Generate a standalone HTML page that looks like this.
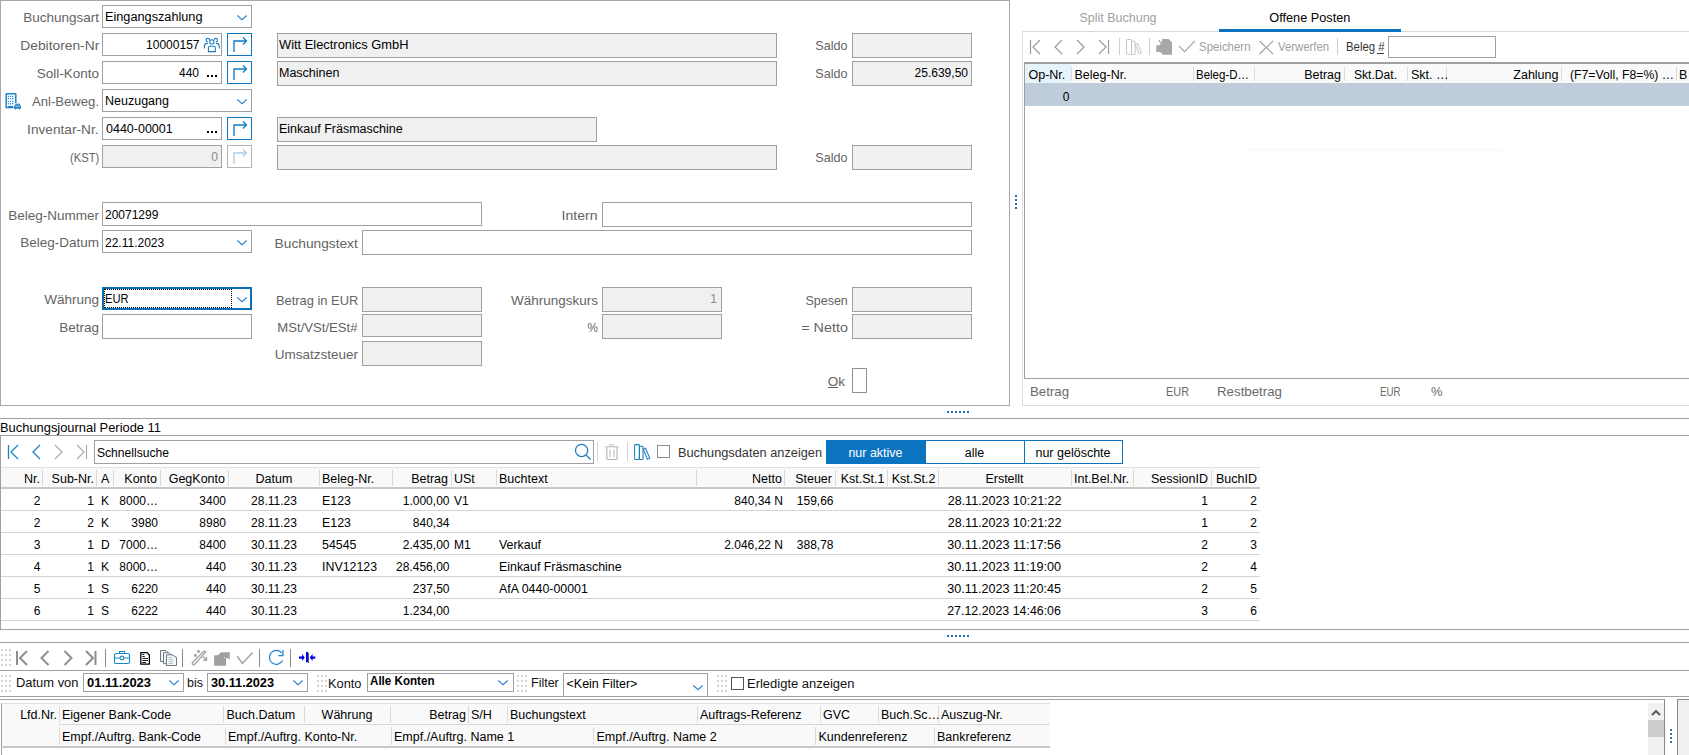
<!DOCTYPE html>
<html><head><meta charset="utf-8"><style>
html,body{margin:0;padding:0;width:1689px;height:755px;overflow:hidden;background:#fff;position:relative}
body>div,body>svg{position:absolute;box-sizing:border-box}
body>div{font-family:"Liberation Sans",sans-serif;line-height:16px;white-space:nowrap;overflow:visible}
</style></head><body>
<div style="left:0px;top:0px;width:1010px;height:406px;background:#fff;border:1px solid #a4a7ae;"></div>
<div style="left:19.20px;top:10px;width:79.80px;font-size:13.5px;color:#646464;text-align:right;">Buchungsart</div>
<div style="left:17.72px;top:38px;width:81.28px;font-size:13.5px;color:#646464;text-align:right;transform:scaleX(1.0223);transform-origin:right center;">Debitoren-Nr</div>
<div style="left:32.71px;top:66px;width:66.29px;font-size:13.5px;color:#646464;text-align:right;">Soll-Konto</div>
<div style="left:25.96px;top:94px;width:73.04px;font-size:13.5px;color:#646464;text-align:right;transform:scaleX(0.9705);transform-origin:right center;">Anl-Beweg.</div>
<div style="left:24.47px;top:122px;width:74.53px;font-size:13.5px;color:#646464;text-align:right;transform:scaleX(1.0124);transform-origin:right center;">Inventar-Nr.</div>
<div style="left:59.75px;top:150px;width:39.25px;font-size:13.5px;color:#646464;text-align:right;transform:scaleX(0.8313);transform-origin:right center;">(KST)</div>
<div style="left:102px;top:5px;width:150px;height:23px;background:#fff;border:1px solid #a0a0a0;"></div>
<div style="left:105.00px;top:9px;width:99.91px;font-size:12.5px;color:#000;text-align:left;transform:scaleX(1.0166);transform-origin:left center;">Eingangszahlung</div>
<svg style="left:237px;top:15px" width="11" height="7"><path d="M0.3 0.5 L5 4.7 L9.7 0.5" fill="none" stroke="#2a7fc8" stroke-width="1.05"/></svg>
<div style="left:102px;top:33px;width:120px;height:23px;background:#fff;border:1px solid #a0a0a0;"></div>
<div style="left:142.11px;top:37px;width:57.39px;font-size:12px;color:#000;text-align:right;">10000157</div>
<div style="left:227px;top:33px;width:25px;height:23px;background:#fff;border:1px solid #0b78c4;"></div>
<svg style="left:227px;top:33px" width="25" height="23"><path d="M7 19 V8 H19" fill="none" stroke="#0b78c4" stroke-width="1.3"/><path d="M16 4.5 L19.5 8 L16 11.5" fill="none" stroke="#0b78c4" stroke-width="1.3"/></svg>
<div style="left:102px;top:61px;width:120px;height:23px;background:#fff;border:1px solid #a0a0a0;"></div>
<div style="left:174.98px;top:65px;width:24.02px;font-size:12px;color:#000;text-align:right;">440</div>
<div style="left:207px;top:75px;width:2px;height:2px;background:#000;"></div>
<div style="left:211px;top:75px;width:2px;height:2px;background:#000;"></div>
<div style="left:215px;top:75px;width:2px;height:2px;background:#000;"></div>
<div style="left:227px;top:61px;width:25px;height:23px;background:#fff;border:1px solid #0b78c4;"></div>
<svg style="left:227px;top:61px" width="25" height="23"><path d="M7 19 V8 H19" fill="none" stroke="#0b78c4" stroke-width="1.3"/><path d="M16 4.5 L19.5 8 L16 11.5" fill="none" stroke="#0b78c4" stroke-width="1.3"/></svg>
<div style="left:102px;top:89px;width:150px;height:23px;background:#fff;border:1px solid #a0a0a0;"></div>
<div style="left:105.00px;top:93px;width:67.94px;font-size:12.5px;color:#000;text-align:left;">Neuzugang</div>
<svg style="left:237px;top:99px" width="11" height="7"><path d="M0.3 0.5 L5 4.7 L9.7 0.5" fill="none" stroke="#2a7fc8" stroke-width="1.05"/></svg>
<div style="left:102px;top:117px;width:120px;height:23px;background:#fff;border:1px solid #a0a0a0;"></div>
<div style="left:106.00px;top:121px;width:70.73px;font-size:12.5px;color:#000;text-align:left;">0440-00001</div>
<div style="left:207px;top:131px;width:2px;height:2px;background:#000;"></div>
<div style="left:211px;top:131px;width:2px;height:2px;background:#000;"></div>
<div style="left:215px;top:131px;width:2px;height:2px;background:#000;"></div>
<div style="left:227px;top:117px;width:25px;height:23px;background:#fff;border:1px solid #0b78c4;"></div>
<svg style="left:227px;top:117px" width="25" height="23"><path d="M7 19 V8 H19" fill="none" stroke="#0b78c4" stroke-width="1.3"/><path d="M16 4.5 L19.5 8 L16 11.5" fill="none" stroke="#0b78c4" stroke-width="1.3"/></svg>
<div style="left:102px;top:145px;width:120px;height:23px;background:#f0f0f0;border:1px solid #a0a0a0;"></div>
<div style="left:207.33px;top:149px;width:10.67px;font-size:12px;color:#8a8a8a;text-align:right;">0</div>
<div style="left:227px;top:145px;width:25px;height:23px;background:#fff;border:1px solid #b4b4b4;"></div>
<svg style="left:227px;top:145px" width="25" height="23"><path d="M7 19 V8 H19" fill="none" stroke="#a9cfe9" stroke-width="1.3"/><path d="M16 4.5 L19.5 8 L16 11.5" fill="none" stroke="#a9cfe9" stroke-width="1.3"/></svg>
<div style="left:277px;top:33px;width:500px;height:25px;background:#f0f0f0;border:1px solid #a0a0a0;"></div>
<div style="left:279.00px;top:37px;width:129.71px;font-size:12.5px;color:#000;text-align:left;transform:scaleX(1.0301);transform-origin:left center;">Witt Electronics GmbH</div>
<div style="left:277px;top:61px;width:500px;height:25px;background:#f0f0f0;border:1px solid #a0a0a0;"></div>
<div style="left:279.00px;top:65px;width:64.45px;font-size:12.5px;color:#000;text-align:left;">Maschinen</div>
<div style="left:277px;top:117px;width:320px;height:25px;background:#f0f0f0;border:1px solid #a0a0a0;"></div>
<div style="left:279.00px;top:121px;width:127.66px;font-size:12.5px;color:#000;text-align:left;">Einkauf Fräsmaschine</div>
<div style="left:277px;top:145px;width:500px;height:25px;background:#f0f0f0;border:1px solid #a0a0a0;"></div>
<div style="left:809.47px;top:38px;width:38.53px;font-size:13.5px;color:#646464;text-align:right;transform:scaleX(0.9326);transform-origin:right center;">Saldo</div>
<div style="left:852px;top:33px;width:120px;height:25px;background:#f0f0f0;border:1px solid #a0a0a0;"></div>
<div style="left:809.47px;top:66px;width:38.53px;font-size:13.5px;color:#646464;text-align:right;transform:scaleX(0.9326);transform-origin:right center;">Saldo</div>
<div style="left:852px;top:61px;width:120px;height:25px;background:#f0f0f0;border:1px solid #a0a0a0;"></div>
<div style="left:809.47px;top:150px;width:38.53px;font-size:13.5px;color:#646464;text-align:right;transform:scaleX(0.9326);transform-origin:right center;">Saldo</div>
<div style="left:852px;top:145px;width:120px;height:25px;background:#f0f0f0;border:1px solid #a0a0a0;"></div>
<div style="left:910.62px;top:65px;width:57.38px;font-size:12px;color:#000;text-align:right;">25.639,50</div>
<div style="left:4.22px;top:208px;width:94.78px;font-size:13.5px;color:#646464;text-align:right;">Beleg-Nummer</div>
<div style="left:102px;top:202px;width:380px;height:24px;background:#fff;border:1px solid #a0a0a0;"></div>
<div style="left:105.00px;top:207px;width:57.39px;font-size:12px;color:#000;text-align:left;">20071299</div>
<div style="left:559.48px;top:208px;width:38.52px;font-size:13.5px;color:#646464;text-align:right;transform:scaleX(1.0428);transform-origin:right center;">Intern</div>
<div style="left:602px;top:202px;width:370px;height:25px;background:#fff;border:1px solid #a0a0a0;"></div>
<div style="left:16.21px;top:235px;width:82.79px;font-size:13.5px;color:#646464;text-align:right;">Beleg-Datum</div>
<div style="left:102px;top:230px;width:150px;height:23px;background:#fff;border:1px solid #a0a0a0;"></div>
<div style="left:105.00px;top:235px;width:63.17px;font-size:12px;color:#000;text-align:left;">22.11.2023</div>
<svg style="left:237px;top:240px" width="11" height="7"><path d="M0.3 0.5 L5 4.7 L9.7 0.5" fill="none" stroke="#2a7fc8" stroke-width="1.05"/></svg>
<div style="left:272.20px;top:236px;width:85.80px;font-size:13.5px;color:#646464;text-align:right;transform:scaleX(1.0171);transform-origin:right center;">Buchungstext</div>
<div style="left:362px;top:230px;width:610px;height:25px;background:#fff;border:1px solid #a0a0a0;"></div>
<div style="left:40.22px;top:292px;width:58.78px;font-size:13.5px;color:#646464;text-align:right;">Währung</div>
<div style="left:102px;top:287px;width:150px;height:23px;background:#fff;border:2px solid #0a6fb8;"></div>
<div style="left:104px;top:289px;width:128px;height:19px;border:1px dotted #000"></div>
<div style="left:104.60px;top:291px;width:30.39px;font-size:12.5px;color:#000;text-align:left;transform:scaleX(0.8904);transform-origin:left center;">EUR</div>
<svg style="left:237px;top:297px" width="11" height="7"><path d="M0.3 0.5 L5 4.7 L9.7 0.5" fill="none" stroke="#2a7fc8" stroke-width="1.05"/></svg>
<div style="left:55.22px;top:320px;width:43.78px;font-size:13.5px;color:#646464;text-align:right;">Betrag</div>
<div style="left:102px;top:314px;width:150px;height:25px;background:#fff;border:1px solid #a0a0a0;"></div>
<div style="left:267.71px;top:293px;width:90.29px;font-size:13.5px;color:#646464;text-align:right;transform:scaleX(0.9538);transform-origin:right center;">Betrag in EUR</div>
<div style="left:362px;top:287px;width:120px;height:25px;background:#f0f0f0;border:1px solid #a0a0a0;"></div>
<div style="left:271.47px;top:320px;width:86.53px;font-size:13.5px;color:#646464;text-align:right;transform:scaleX(0.9718);transform-origin:right center;">MSt/VSt/ESt#</div>
<div style="left:362px;top:314px;width:120px;height:23px;background:#f0f0f0;border:1px solid #a0a0a0;"></div>
<div style="left:270.73px;top:347px;width:87.27px;font-size:13.5px;color:#646464;text-align:right;">Umsatzsteuer</div>
<div style="left:362px;top:341px;width:120px;height:25px;background:#f0f0f0;border:1px solid #a0a0a0;"></div>
<div style="left:506.97px;top:293px;width:91.03px;font-size:13.5px;color:#646464;text-align:right;">Währungskurs</div>
<div style="left:602px;top:287px;width:120px;height:25px;background:#f0f0f0;border:1px solid #a0a0a0;"></div>
<div style="left:706.33px;top:291px;width:10.67px;font-size:12px;color:#8a8a8a;text-align:right;">1</div>
<div style="left:582.00px;top:320px;width:16.00px;font-size:13.5px;color:#646464;text-align:right;transform:scaleX(0.8664);transform-origin:right center;">%</div>
<div style="left:602px;top:314px;width:120px;height:25px;background:#f0f0f0;border:1px solid #a0a0a0;"></div>
<div style="left:798.21px;top:293px;width:49.79px;font-size:13.5px;color:#646464;text-align:right;transform:scaleX(0.9238);transform-origin:right center;">Spesen</div>
<div style="left:852px;top:287px;width:120px;height:25px;background:#f0f0f0;border:1px solid #a0a0a0;"></div>
<div style="left:800.10px;top:320px;width:47.90px;font-size:13.5px;color:#646464;text-align:right;transform:scaleX(1.0637);transform-origin:right center;">= Netto</div>
<div style="left:852px;top:314px;width:120px;height:25px;background:#f0f0f0;border:1px solid #a0a0a0;"></div>
<div style="left:823.75px;top:374px;width:21.25px;font-size:13.5px;color:#646464;text-align:right;">Ok</div>
<div style="left:828px;top:387px;width:10px;height:1px;background:#646464;"></div>
<div style="left:852px;top:368px;width:15px;height:25px;background:#fff;border:1px solid #909090;"></div>
<svg style="left:0;top:88px" width="24" height="24"><g fill="none" stroke="#1f80c6" stroke-width="1.5"><path d="M13.5 19.5 H6.2 V6.5 Q6.2 5.8 6.9 5.8 H15 Q15.8 5.8 15.8 6.6 V15"/></g><rect x="7.800000000000001" y="7.800000000000001" width="1.3" height="1.3" fill="#3a8fd0"/><rect x="7.800000000000001" y="10.0" width="1.3" height="1.3" fill="#3a8fd0"/><rect x="7.800000000000001" y="12.8" width="1.3" height="1.3" fill="#3a8fd0"/><rect x="7.800000000000001" y="15.0" width="1.3" height="1.3" fill="#3a8fd0"/><rect x="9.9" y="7.800000000000001" width="1.3" height="1.3" fill="#3a8fd0"/><rect x="9.9" y="10.0" width="1.3" height="1.3" fill="#3a8fd0"/><rect x="9.9" y="12.8" width="1.3" height="1.3" fill="#3a8fd0"/><rect x="9.9" y="15.0" width="1.3" height="1.3" fill="#3a8fd0"/><rect x="12.0" y="7.800000000000001" width="1.3" height="1.3" fill="#3a8fd0"/><rect x="12.0" y="10.0" width="1.3" height="1.3" fill="#3a8fd0"/><rect x="12.0" y="12.8" width="1.3" height="1.3" fill="#3a8fd0"/><rect x="12.0" y="15.0" width="1.3" height="1.3" fill="#3a8fd0"/><rect x="8" y="18" width="5" height="2" rx="0.8" fill="#1a7cc4"/><path d="M15.2 16.3 H20" stroke="#1f80c6" stroke-width="1.2"/><rect x="14" y="17.2" width="7" height="3.2" rx="1" fill="#1a7cc4"/><rect x="15.2" y="18" width="4.6" height="1" fill="#8cc0e6"/><circle cx="15.5" cy="20.5" r="0.9" fill="#1a7cc4"/><circle cx="19.5" cy="20.5" r="0.9" fill="#1a7cc4"/></svg>
<svg style="left:200px;top:34px" width="24" height="22"><g fill="none" stroke="#1a7cc4" stroke-width="1.1"><circle cx="11.8" cy="7.9" r="2.1"/><path d="M8.4 17.6 V13.7 Q8.4 12.2 9.9 12.2 H13.7 Q15.3 12.2 15.3 13.7 V17.6 Z"/><path d="M7.7 7.9 A1.75 1.75 0 1 1 9.6 6.2"/><path d="M4.4 14.5 V12.3 Q4.4 9.4 7.9 9.4"/><path d="M15.9 7.9 A1.75 1.75 0 1 0 14 6.2"/><path d="M19.3 14.5 V12.3 Q19.3 9.4 15.8 9.4"/></g></svg>
<div style="left:1022px;top:31px;width:667px;height:1px;background:#d9d9d9;"></div>
<div style="left:1022px;top:31px;width:1px;height:375px;background:#dcdcdc;"></div>
<div style="left:1022px;top:405px;width:667px;height:1px;background:#dcdcdc;"></div>
<div style="left:1077.43px;top:10px;width:81.14px;font-size:12.5px;color:#a0a0a0;text-align:center;">Split Buchung</div>
<div style="left:1268.16px;top:10px;width:83.69px;font-size:12.5px;color:#000;text-align:center;transform:scaleX(1.0165);transform-origin:center center;">Offene Posten</div>
<div style="left:1219px;top:29px;width:182px;height:3px;background:#0b74c0;"></div>
<svg style="left:0;top:0" width="1689" height="755"><path d="M1030.5 40 V54" stroke="#9a9a9a" stroke-width="1.2"/><path d="M1040 40 L1033 47 L1040 54" fill="none" stroke="#9a9a9a" stroke-width="1.2"/><path d="M1062 40 L1055 47 L1062 54" fill="none" stroke="#9a9a9a" stroke-width="1.2"/><path d="M1077 40 L1084 47 L1077 54" fill="none" stroke="#9a9a9a" stroke-width="1.2"/><path d="M1099 40 L1106 47 L1099 54" fill="none" stroke="#9a9a9a" stroke-width="1.2"/><path d="M1108.5 40 V54" stroke="#9a9a9a" stroke-width="1.2"/><path d="M1119.5 38 V55" stroke="#d0d0d0" stroke-width="1"/><path d="M1149.5 38 V55" stroke="#d0d0d0" stroke-width="1"/><path d="M1337.5 38 V55" stroke="#d0d0d0" stroke-width="1"/><g fill="none" stroke="#c4c4c4" stroke-width="1"><rect x="1126.5" y="39.5" width="5" height="14.8" rx="0.8"/><rect x="1131.5" y="41.3" width="3.6" height="13" rx="0.6"/><path d="M1135.3 44.3 L1137.6 43.3 L1141.4 52.8 L1139 53.8 Z"/></g><path d="M1156.2 45.2 H1159.4 L1160.8 43.8 L1158.2 40.6 L1159.2 39.8 L1161.8 42.8 L1162 39 H1168.6 L1172 42.3 V54.8 H1162 V52.8 H1160 L1159.3 52 H1156.2 Z" fill="#a8a8a8"/><path d="M1179 46 L1184.6 51.6 L1194.8 41" fill="none" stroke="#a8a8a8" stroke-width="1.1"/><path d="M1259.5 41 L1273 54 M1273 41 L1259.5 54" stroke="#a0a0a0" stroke-width="1.2"/></svg>
<div style="left:1199.00px;top:39px;width:60.29px;font-size:12.5px;color:#a0a0a0;text-align:left;transform:scaleX(0.9150);transform-origin:left center;">Speichern</div>
<div style="left:1278.00px;top:39px;width:60.28px;font-size:12.5px;color:#a0a0a0;text-align:left;transform:scaleX(0.9062);transform-origin:left center;">Verwerfen</div>
<div style="left:1345.50px;top:39px;width:46.40px;font-size:12.5px;color:#333;text-align:left;transform:scaleX(0.9081);transform-origin:left center;">Beleg #</div>
<div style="left:1377px;top:53px;width:7px;height:1px;background:#333;"></div>
<div style="left:1388px;top:36px;width:108px;height:22px;background:#fff;border:1px solid #a0a0a0;"></div>
<div style="left:1024px;top:62px;width:1px;height:317px;background:#a0a0a0;"></div>
<div style="left:1024px;top:62px;width:665px;height:2px;background:#a0a0a0;"></div>
<div style="left:1024px;top:378px;width:665px;height:1px;background:#a0a0a0;"></div>
<div style="left:1025px;top:64px;width:664px;height:19px;background:#fafafa;"></div>
<div style="left:1025px;top:64px;width:46px;height:19px;background:#e5f3fb;"></div>
<div style="left:1025px;top:83px;width:664px;height:23px;background:#bfccd9;"></div>
<div style="left:1071px;top:67px;width:1px;height:14px;background:#dadada;"></div>
<div style="left:1193px;top:67px;width:1px;height:14px;background:#dadada;"></div>
<div style="left:1254px;top:67px;width:1px;height:14px;background:#dadada;"></div>
<div style="left:1344px;top:67px;width:1px;height:14px;background:#dadada;"></div>
<div style="left:1407px;top:67px;width:1px;height:14px;background:#dadada;"></div>
<div style="left:1446px;top:67px;width:1px;height:14px;background:#dadada;"></div>
<div style="left:1561px;top:67px;width:1px;height:14px;background:#dadada;"></div>
<div style="left:1676px;top:67px;width:1px;height:14px;background:#dadada;"></div>
<div style="left:1028.50px;top:67px;width:40.81px;font-size:12.5px;color:#000;text-align:left;">Op-Nr.</div>
<div style="left:1074.50px;top:67px;width:56.11px;font-size:12.5px;color:#000;text-align:left;">Beleg-Nr.</div>
<div style="left:1196.00px;top:67px;width:61.66px;font-size:12.5px;color:#000;text-align:left;transform:scaleX(0.9192);transform-origin:left center;">Beleg-D…</div>
<div style="left:1300.17px;top:67px;width:40.83px;font-size:12.5px;color:#000;text-align:right;">Betrag</div>
<div style="left:1354.00px;top:67px;width:48.46px;font-size:12.5px;color:#000;text-align:left;transform:scaleX(0.9672);transform-origin:left center;">Skt.Dat.</div>
<div style="left:1411.00px;top:67px;width:41.51px;font-size:12.5px;color:#000;text-align:left;">Skt. …</div>
<div style="left:1509.33px;top:67px;width:49.17px;font-size:12.5px;color:#000;text-align:right;">Zahlung</div>
<div style="left:1570.00px;top:67px;width:110.29px;font-size:12.5px;color:#000;text-align:left;transform:scaleX(0.9785);transform-origin:left center;">(F7=Voll, F8=%) …</div>
<div style="left:1679.00px;top:67px;width:12.34px;font-size:12.5px;color:#000;text-align:left;">B</div>
<div style="left:1058.83px;top:89px;width:10.67px;font-size:12px;color:#000;text-align:right;">0</div>
<div style="left:1247px;top:148px;width:255px;height:3px;background:#fbfbfb;"></div>
<div style="left:1029.50px;top:384px;width:42.30px;font-size:13px;color:#6a6a6a;text-align:left;transform:scaleX(1.0182);transform-origin:left center;">Betrag</div>
<div style="left:1166.00px;top:384px;width:31.45px;font-size:13px;color:#6a6a6a;text-align:left;transform:scaleX(0.8380);transform-origin:left center;">EUR</div>
<div style="left:1217.00px;top:384px;width:67.59px;font-size:13px;color:#6a6a6a;text-align:left;transform:scaleX(1.0222);transform-origin:left center;">Restbetrag</div>
<div style="left:1380.00px;top:384px;width:31.45px;font-size:13px;color:#6a6a6a;text-align:left;transform:scaleX(0.7469);transform-origin:left center;">EUR</div>
<div style="left:1431.00px;top:384px;width:15.56px;font-size:13px;color:#6a6a6a;text-align:left;">%</div>
<div style="left:1015px;top:195px;width:2px;height:2px;background:#1a74c0;"></div>
<div style="left:1015px;top:199px;width:2px;height:2px;background:#1a74c0;"></div>
<div style="left:1015px;top:203px;width:2px;height:2px;background:#1a74c0;"></div>
<div style="left:1015px;top:207px;width:2px;height:2px;background:#1a74c0;"></div>
<div style="left:947px;top:411px;width:2px;height:2px;background:#1a74c0;"></div>
<div style="left:951px;top:411px;width:2px;height:2px;background:#1a74c0;"></div>
<div style="left:955px;top:411px;width:2px;height:2px;background:#1a74c0;"></div>
<div style="left:959px;top:411px;width:2px;height:2px;background:#1a74c0;"></div>
<div style="left:963px;top:411px;width:2px;height:2px;background:#1a74c0;"></div>
<div style="left:967px;top:411px;width:2px;height:2px;background:#1a74c0;"></div>
<div style="left:947px;top:635px;width:2px;height:2px;background:#1a74c0;"></div>
<div style="left:951px;top:635px;width:2px;height:2px;background:#1a74c0;"></div>
<div style="left:955px;top:635px;width:2px;height:2px;background:#1a74c0;"></div>
<div style="left:959px;top:635px;width:2px;height:2px;background:#1a74c0;"></div>
<div style="left:963px;top:635px;width:2px;height:2px;background:#1a74c0;"></div>
<div style="left:967px;top:635px;width:2px;height:2px;background:#1a74c0;"></div>
<div style="left:0px;top:418px;width:1689px;height:1px;background:#a0a0a0;"></div>
<div style="left:0.00px;top:420px;width:160.13px;font-size:12.5px;color:#000;text-align:left;transform:scaleX(1.0312);transform-origin:left center;">Buchungsjournal Periode 11</div>
<div style="left:0px;top:435px;width:1689px;height:1px;background:#a0a0a0;"></div>
<div style="left:0px;top:435px;width:1px;height:195px;background:#a0a0a0;"></div>
<div style="left:0px;top:629px;width:1689px;height:1px;background:#a0a0a0;"></div>
<div style="left:94px;top:440px;width:500px;height:24px;background:#fff;border:1px solid #a0a0a0;"></div>
<svg style="left:0;top:0" width="1689" height="755"><path d="M8.5 445 V459" stroke="#1a86c8" stroke-width="1.3"/><path d="M18 445 L11 452 L18 459" fill="none" stroke="#1a86c8" stroke-width="1.3"/><path d="M40 445 L33 452 L40 459" fill="none" stroke="#1a86c8" stroke-width="1.3"/><path d="M55 445 L62 452 L55 459" fill="none" stroke="#aaa" stroke-width="1.2"/><path d="M77 445 L84 452 L77 459" fill="none" stroke="#aaa" stroke-width="1.2"/><path d="M86.5 445 V459" stroke="#aaa" stroke-width="1.2"/><circle cx="581.6" cy="450.4" r="6.1" fill="none" stroke="#1a7fc0" stroke-width="1.25"/><path d="M586.3 455.3 L590.6 459.5" stroke="#1a7fc0" stroke-width="1.3"/><path d="M597.5 442 V461" stroke="#d4d4d4"/><path d="M627.5 442 V461" stroke="#d4d4d4"/><path d="M605.2 446.8 H618.5" stroke="#c4c4c4" stroke-width="1.3"/><path d="M609.5 446.3 V444.8 H613.5 V446.3" fill="none" stroke="#c4c4c4" stroke-width="1"/><path d="M606.8 447.5 V458.5 Q606.8 459.5 607.8 459.5 H616 Q617 459.5 617 458.5 V447.5" fill="none" stroke="#b4b4b4" stroke-width="1.1"/><path d="M610 449.5 V457 M614 449.5 V457" stroke="#c8c8c8" stroke-width="1.3"/><g fill="none" stroke="#1a7fc0" stroke-width="1.05"><rect x="634.6" y="444.6" width="4.8" height="14.8" rx="0.8"/><rect x="639.4" y="446.3" width="3.6" height="13.1" rx="0.6"/><path d="M643.3 449.2 L645.5 448.2 L649.8 458.2 L647.4 459.3 Z"/></g></svg>
<div style="left:97.00px;top:445px;width:78.35px;font-size:12.5px;color:#000;text-align:left;transform:scaleX(0.9683);transform-origin:left center;">Schnellsuche</div>
<div style="left:657px;top:445px;width:13px;height:13px;background:#fff;border:1px solid #8c8c8c;"></div>
<div style="left:678.00px;top:445px;width:145.09px;font-size:12.5px;color:#333;text-align:left;transform:scaleX(1.0206);transform-origin:left center;">Buchungsdaten anzeigen</div>
<div style="left:826px;top:440px;width:100px;height:24px;background:#0b74c0;"></div>
<div style="left:925px;top:440px;width:198px;height:24px;background:#fff;border:1px solid #0b74c0;"></div>
<div style="left:1024px;top:441px;width:1px;height:22px;background:#0b74c0;"></div>
<div style="left:846.40px;top:445px;width:58.19px;font-size:12.5px;color:#fff;text-align:center;">nur aktive</div>
<div style="left:962.77px;top:445px;width:23.46px;font-size:12.5px;color:#000;text-align:center;">alle</div>
<div style="left:1033.48px;top:445px;width:79.05px;font-size:12.5px;color:#000;text-align:center;">nur gelöschte</div>
<div style="left:1px;top:467px;width:1259px;height:1px;background:#e0e0e0;"></div>
<div style="left:1px;top:468px;width:1259px;height:20px;background:#f9f9f9;"></div>
<div style="left:1px;top:487px;width:1259px;height:2px;background:#c8c8c8;"></div>
<div style="left:42px;top:470px;width:1px;height:16px;background:#dadada;"></div>
<div style="left:96px;top:470px;width:1px;height:16px;background:#dadada;"></div>
<div style="left:113px;top:470px;width:1px;height:16px;background:#dadada;"></div>
<div style="left:160px;top:470px;width:1px;height:16px;background:#dadada;"></div>
<div style="left:228px;top:470px;width:1px;height:16px;background:#dadada;"></div>
<div style="left:319px;top:470px;width:1px;height:16px;background:#dadada;"></div>
<div style="left:392px;top:470px;width:1px;height:16px;background:#dadada;"></div>
<div style="left:451px;top:470px;width:1px;height:16px;background:#dadada;"></div>
<div style="left:496px;top:470px;width:1px;height:16px;background:#dadada;"></div>
<div style="left:696px;top:470px;width:1px;height:16px;background:#dadada;"></div>
<div style="left:784px;top:470px;width:1px;height:16px;background:#dadada;"></div>
<div style="left:835px;top:470px;width:1px;height:16px;background:#dadada;"></div>
<div style="left:887px;top:470px;width:1px;height:16px;background:#dadada;"></div>
<div style="left:938px;top:470px;width:1px;height:16px;background:#dadada;"></div>
<div style="left:1071px;top:470px;width:1px;height:16px;background:#dadada;"></div>
<div style="left:1133px;top:470px;width:1px;height:16px;background:#dadada;"></div>
<div style="left:1211px;top:470px;width:1px;height:16px;background:#dadada;"></div>
<div style="left:20.03px;top:471px;width:19.97px;font-size:12.5px;color:#000;text-align:right;">Nr.</div>
<div style="left:47.62px;top:471px;width:46.38px;font-size:12.5px;color:#000;text-align:right;">Sub-Nr.</div>
<div style="left:101.00px;top:471px;width:12.34px;font-size:12.5px;color:#000;text-align:left;">A</div>
<div style="left:120.33px;top:471px;width:36.67px;font-size:12.5px;color:#000;text-align:right;">Konto</div>
<div style="left:164.71px;top:471px;width:60.29px;font-size:12.5px;color:#000;text-align:right;">GegKonto</div>
<div style="left:253.59px;top:471px;width:40.82px;font-size:12.5px;color:#000;text-align:center;">Datum</div>
<div style="left:322.00px;top:471px;width:56.11px;font-size:12.5px;color:#000;text-align:left;">Beleg-Nr.</div>
<div style="left:407.17px;top:471px;width:40.83px;font-size:12.5px;color:#000;text-align:right;">Betrag</div>
<div style="left:454.00px;top:471px;width:24.84px;font-size:12.5px;color:#000;text-align:left;">USt</div>
<div style="left:499.00px;top:471px;width:52.64px;font-size:12.5px;color:#000;text-align:left;">Buchtext</div>
<div style="left:748.12px;top:471px;width:33.88px;font-size:12.5px;color:#000;text-align:right;">Netto</div>
<div style="left:791.17px;top:471px;width:40.83px;font-size:12.5px;color:#000;text-align:right;">Steuer</div>
<div style="left:836.73px;top:471px;width:47.77px;font-size:12.5px;color:#000;text-align:right;">Kst.St.1</div>
<div style="left:887.73px;top:471px;width:47.77px;font-size:12.5px;color:#000;text-align:right;">Kst.St.2</div>
<div style="left:983.40px;top:471px;width:42.20px;font-size:12.5px;color:#000;text-align:center;">Erstellt</div>
<div style="left:1074.00px;top:471px;width:58.88px;font-size:12.5px;color:#000;text-align:left;">Int.Bel.Nr.</div>
<div style="left:1147.03px;top:471px;width:60.97px;font-size:12.5px;color:#000;text-align:right;">SessionID</div>
<div style="left:1212.01px;top:471px;width:44.99px;font-size:12.5px;color:#000;text-align:right;">BuchID</div>
<div style="left:1px;top:510px;width:1259px;height:1px;background:#d4d4d4;"></div>
<div style="left:29.83px;top:493px;width:10.67px;font-size:12px;color:#000;text-align:right;">2</div>
<div style="left:83.33px;top:493px;width:10.67px;font-size:12px;color:#000;text-align:right;">1</div>
<div style="left:101.00px;top:493px;width:12.00px;font-size:12px;color:#000;text-align:left;">K</div>
<div style="left:115.30px;top:493px;width:42.70px;font-size:12px;color:#000;text-align:right;">8000…</div>
<div style="left:195.30px;top:493px;width:30.70px;font-size:12px;color:#000;text-align:right;">3400</div>
<div style="left:249.09px;top:493px;width:49.82px;font-size:12px;color:#000;text-align:center;">28.11.23</div>
<div style="left:322.00px;top:493px;width:32.96px;font-size:12.4px;color:#000;text-align:left;">E123</div>
<div style="left:398.79px;top:493px;width:50.71px;font-size:12px;color:#000;text-align:right;">1.000,00</div>
<div style="left:454.00px;top:493px;width:18.68px;font-size:12px;color:#000;text-align:left;">V1</div>
<div style="left:730.30px;top:493px;width:52.70px;font-size:12px;color:#000;text-align:right;">840,34 N</div>
<div style="left:792.80px;top:493px;width:40.70px;font-size:12px;color:#000;text-align:right;">159,66</div>
<div style="left:947.89px;top:493px;width:113.21px;font-size:12px;color:#000;text-align:center;transform:scaleX(1.0411);transform-origin:center center;">28.11.2023 10:21:22</div>
<div style="left:1197.33px;top:493px;width:10.67px;font-size:12px;color:#000;text-align:right;">1</div>
<div style="left:1246.33px;top:493px;width:10.67px;font-size:12px;color:#000;text-align:right;">2</div>
<div style="left:1px;top:532px;width:1259px;height:1px;background:#d4d4d4;"></div>
<div style="left:29.83px;top:515px;width:10.67px;font-size:12px;color:#000;text-align:right;">2</div>
<div style="left:83.33px;top:515px;width:10.67px;font-size:12px;color:#000;text-align:right;">2</div>
<div style="left:101.00px;top:515px;width:12.00px;font-size:12px;color:#000;text-align:left;">K</div>
<div style="left:127.30px;top:515px;width:30.70px;font-size:12px;color:#000;text-align:right;">3980</div>
<div style="left:195.30px;top:515px;width:30.70px;font-size:12px;color:#000;text-align:right;">8980</div>
<div style="left:249.09px;top:515px;width:49.82px;font-size:12px;color:#000;text-align:center;">28.11.23</div>
<div style="left:322.00px;top:515px;width:32.96px;font-size:12.4px;color:#000;text-align:left;">E123</div>
<div style="left:408.80px;top:515px;width:40.70px;font-size:12px;color:#000;text-align:right;">840,34</div>
<div style="left:947.89px;top:515px;width:113.21px;font-size:12px;color:#000;text-align:center;transform:scaleX(1.0411);transform-origin:center center;">28.11.2023 10:21:22</div>
<div style="left:1197.33px;top:515px;width:10.67px;font-size:12px;color:#000;text-align:right;">1</div>
<div style="left:1246.33px;top:515px;width:10.67px;font-size:12px;color:#000;text-align:right;">2</div>
<div style="left:1px;top:554px;width:1259px;height:1px;background:#d4d4d4;"></div>
<div style="left:29.83px;top:537px;width:10.67px;font-size:12px;color:#000;text-align:right;">3</div>
<div style="left:83.33px;top:537px;width:10.67px;font-size:12px;color:#000;text-align:right;">1</div>
<div style="left:101.00px;top:537px;width:12.67px;font-size:12px;color:#000;text-align:left;">D</div>
<div style="left:115.30px;top:537px;width:42.70px;font-size:12px;color:#000;text-align:right;">7000…</div>
<div style="left:195.30px;top:537px;width:30.70px;font-size:12px;color:#000;text-align:right;">8400</div>
<div style="left:249.09px;top:537px;width:49.82px;font-size:12px;color:#000;text-align:center;">30.11.23</div>
<div style="left:322.00px;top:537px;width:38.48px;font-size:12.4px;color:#000;text-align:left;">54545</div>
<div style="left:398.79px;top:537px;width:50.71px;font-size:12px;color:#000;text-align:right;">2.435,00</div>
<div style="left:454.00px;top:537px;width:20.67px;font-size:12px;color:#000;text-align:left;">M1</div>
<div style="left:499.00px;top:537px;width:46.05px;font-size:12.4px;color:#000;text-align:left;">Verkauf</div>
<div style="left:720.29px;top:537px;width:62.71px;font-size:12px;color:#000;text-align:right;">2.046,22 N</div>
<div style="left:792.80px;top:537px;width:40.70px;font-size:12px;color:#000;text-align:right;">388,78</div>
<div style="left:948.34px;top:537px;width:112.32px;font-size:12px;color:#000;text-align:center;transform:scaleX(1.0496);transform-origin:center center;">30.11.2023 11:17:56</div>
<div style="left:1197.33px;top:537px;width:10.67px;font-size:12px;color:#000;text-align:right;">2</div>
<div style="left:1246.33px;top:537px;width:10.67px;font-size:12px;color:#000;text-align:right;">3</div>
<div style="left:1px;top:576px;width:1259px;height:1px;background:#d4d4d4;"></div>
<div style="left:29.83px;top:559px;width:10.67px;font-size:12px;color:#000;text-align:right;">4</div>
<div style="left:83.33px;top:559px;width:10.67px;font-size:12px;color:#000;text-align:right;">1</div>
<div style="left:101.00px;top:559px;width:12.00px;font-size:12px;color:#000;text-align:left;">K</div>
<div style="left:115.30px;top:559px;width:42.70px;font-size:12px;color:#000;text-align:right;">8000…</div>
<div style="left:201.98px;top:559px;width:24.02px;font-size:12px;color:#000;text-align:right;">440</div>
<div style="left:249.09px;top:559px;width:49.82px;font-size:12px;color:#000;text-align:center;">30.11.23</div>
<div style="left:322.00px;top:559px;width:59.15px;font-size:12.4px;color:#000;text-align:left;">INV12123</div>
<div style="left:392.12px;top:559px;width:57.38px;font-size:12px;color:#000;text-align:right;">28.456,00</div>
<div style="left:499.00px;top:559px;width:126.67px;font-size:12.4px;color:#000;text-align:left;">Einkauf Fräsmaschine</div>
<div style="left:948.34px;top:559px;width:112.32px;font-size:12px;color:#000;text-align:center;transform:scaleX(1.0496);transform-origin:center center;">30.11.2023 11:19:00</div>
<div style="left:1197.33px;top:559px;width:10.67px;font-size:12px;color:#000;text-align:right;">2</div>
<div style="left:1246.33px;top:559px;width:10.67px;font-size:12px;color:#000;text-align:right;">4</div>
<div style="left:1px;top:598px;width:1259px;height:1px;background:#d4d4d4;"></div>
<div style="left:29.83px;top:581px;width:10.67px;font-size:12px;color:#000;text-align:right;">5</div>
<div style="left:83.33px;top:581px;width:10.67px;font-size:12px;color:#000;text-align:right;">1</div>
<div style="left:101.00px;top:581px;width:12.00px;font-size:12px;color:#000;text-align:left;">S</div>
<div style="left:127.30px;top:581px;width:30.70px;font-size:12px;color:#000;text-align:right;">6220</div>
<div style="left:201.98px;top:581px;width:24.02px;font-size:12px;color:#000;text-align:right;">440</div>
<div style="left:249.09px;top:581px;width:49.82px;font-size:12px;color:#000;text-align:center;">30.11.23</div>
<div style="left:408.80px;top:581px;width:40.70px;font-size:12px;color:#000;text-align:right;">237,50</div>
<div style="left:499.00px;top:581px;width:92.94px;font-size:12.4px;color:#000;text-align:left;">AfA 0440-00001</div>
<div style="left:948.34px;top:581px;width:112.32px;font-size:12px;color:#000;text-align:center;transform:scaleX(1.0496);transform-origin:center center;">30.11.2023 11:20:45</div>
<div style="left:1197.33px;top:581px;width:10.67px;font-size:12px;color:#000;text-align:right;">2</div>
<div style="left:1246.33px;top:581px;width:10.67px;font-size:12px;color:#000;text-align:right;">5</div>
<div style="left:1px;top:620px;width:1259px;height:1px;background:#d4d4d4;"></div>
<div style="left:29.83px;top:603px;width:10.67px;font-size:12px;color:#000;text-align:right;">6</div>
<div style="left:83.33px;top:603px;width:10.67px;font-size:12px;color:#000;text-align:right;">1</div>
<div style="left:101.00px;top:603px;width:12.00px;font-size:12px;color:#000;text-align:left;">S</div>
<div style="left:127.30px;top:603px;width:30.70px;font-size:12px;color:#000;text-align:right;">6222</div>
<div style="left:201.98px;top:603px;width:24.02px;font-size:12px;color:#000;text-align:right;">440</div>
<div style="left:249.09px;top:603px;width:49.82px;font-size:12px;color:#000;text-align:center;">30.11.23</div>
<div style="left:398.79px;top:603px;width:50.71px;font-size:12px;color:#000;text-align:right;">1.234,00</div>
<div style="left:947.45px;top:603px;width:114.10px;font-size:12px;color:#000;text-align:center;transform:scaleX(1.0327);transform-origin:center center;">27.12.2023 14:46:06</div>
<div style="left:1197.33px;top:603px;width:10.67px;font-size:12px;color:#000;text-align:right;">3</div>
<div style="left:1246.33px;top:603px;width:10.67px;font-size:12px;color:#000;text-align:right;">6</div>
<div style="left:0px;top:642px;width:1689px;height:1px;background:#a0a0a0;"></div>
<div style="left:1px;top:649px;width:2px;height:2px;background:#d4d4d4;"></div>
<div style="left:5px;top:649px;width:2px;height:2px;background:#d4d4d4;"></div>
<div style="left:9px;top:649px;width:2px;height:2px;background:#d4d4d4;"></div>
<div style="left:1px;top:654px;width:2px;height:2px;background:#d4d4d4;"></div>
<div style="left:5px;top:654px;width:2px;height:2px;background:#d4d4d4;"></div>
<div style="left:9px;top:654px;width:2px;height:2px;background:#d4d4d4;"></div>
<div style="left:1px;top:659px;width:2px;height:2px;background:#d4d4d4;"></div>
<div style="left:5px;top:659px;width:2px;height:2px;background:#d4d4d4;"></div>
<div style="left:9px;top:659px;width:2px;height:2px;background:#d4d4d4;"></div>
<div style="left:1px;top:664px;width:2px;height:2px;background:#d4d4d4;"></div>
<div style="left:5px;top:664px;width:2px;height:2px;background:#d4d4d4;"></div>
<div style="left:9px;top:664px;width:2px;height:2px;background:#d4d4d4;"></div>
<svg style="left:0;top:0" width="1689" height="755"><path d="M17 651 V665" stroke="#8e8e8e" stroke-width="2"/><path d="M27 651 L20 658 L27 665" fill="none" stroke="#8e8e8e" stroke-width="2"/><path d="M48.5 651 L41.5 658 L48.5 665" fill="none" stroke="#8e8e8e" stroke-width="2"/><path d="M64.5 651 L71.5 658 L64.5 665" fill="none" stroke="#8e8e8e" stroke-width="2"/><path d="M86 651 L93 658 L86 665" fill="none" stroke="#8e8e8e" stroke-width="2"/><path d="M95.5 651 V665" stroke="#8e8e8e" stroke-width="2"/><path d="M105.5 649 V667" stroke="#8a8a8a" stroke-width="1"/><path d="M182.5 649 V667" stroke="#8a8a8a" stroke-width="1"/><path d="M259.5 649 V667" stroke="#8a8a8a" stroke-width="1"/><path d="M290.5 649 V667" stroke="#8a8a8a" stroke-width="1"/><g fill="none" stroke="#1a86c8" stroke-width="1.1"><path d="M116.5 653.5 H127.5 Q129.5 653.5 129.5 655.5 V662 Q129.5 663.5 128 663.5 H116 Q114.5 663.5 114.5 662 V655.5 Q114.5 653.5 116.5 653.5 Z"/><path d="M119.5 653.5 V651.5 H124.5 V653.5"/><path d="M114.5 658 H120 M124 658 H129.5"/><circle cx="122" cy="658" r="1.9"/></g><g fill="none" stroke="#000" stroke-width="1.25"><path d="M140.8 652.6 H147 L149.4 655 V664.2 H140.8 Z"/></g><g stroke="#000" stroke-width="0.9"><path d="M142.3 654.5 H144.3 M142.3 656.5 H144.8 M142.3 658.5 H148 M142.3 660.5 H148 M142.3 662.5 H146"/></g><path d="M160.5 650.5 H166 L168.5 653 V661.5 H160.5 Z" fill="#f2f7f9" stroke="#707884" stroke-width="1"/><path d="M163.5 652.7 H169 L171.5 655.2 V663.7 H163.5 Z" fill="#f2f7f9" stroke="#707884" stroke-width="1"/><path d="M166.5 654.8 H172 L176.5 657.3 V665.5 H166.5 Z" fill="#f2f7f9" stroke="#707884" stroke-width="1"/><path d="M168.5 657.5 H172 M168.5 659.5 H173 M168.5 661.5 H173 M168.5 663.5 H173" stroke="#a8b0b8" stroke-width="0.8"/><path d="M192.5 662.5 L203.5 651.5 Q205 650.5 205.8 652 L194.5 664.5 Q193 665.5 192.3 664 Z" fill="#fff" stroke="#a0a0a0" stroke-width="1.3"/><rect x="197.2" y="650.2" width="2.6" height="2.6" fill="#a0a0a0"/><rect x="194.1" y="654.1" width="2.6" height="2.6" fill="#a0a0a0"/><path d="M203 656.5 L206.5 660 M206.5 657 V660.3 H203.2" fill="none" stroke="#a0a0a0" stroke-width="1.2"/><path d="M214.1 655.2 H218 L221 652.2 H229.8 V660 L228.2 658.3 H226 V665.8 H214.1 Z" fill="#a0a0a0"/><circle cx="224.5" cy="657.5" r="0.6" fill="#fff"/><path d="M237.2 656.2 L242.4 663.4 L252.6 652.4" fill="none" stroke="#a0a0a0" stroke-width="1.5"/><path d="M282.6 660.6 A7 7 0 1 1 281.9 653.1" fill="none" stroke="#1a86c8" stroke-width="1.2"/><path d="M283 650 V655.6 H278.3" fill="none" stroke="#1a86c8" stroke-width="1.2"/><rect x="306" y="652" width="2.2" height="10.3" fill="#0000f0"/><rect x="308.2" y="653" width="0.8" height="10" fill="#404060"/><path d="M299 656.4 H302.2 V654 L304.8 657.5 L302.2 661 V658.7 H299 Z" fill="#0000f0"/><path d="M315.3 656.4 H312.6 V654 L309.8 657.5 L312.6 661 V658.7 H315.3 Z" fill="#0000f0"/></svg>
<div style="left:0px;top:670px;width:1689px;height:1px;background:#a0a0a0;"></div>
<div style="left:1px;top:675px;width:2px;height:2px;background:#d4d4d4;"></div>
<div style="left:5px;top:675px;width:2px;height:2px;background:#d4d4d4;"></div>
<div style="left:9px;top:675px;width:2px;height:2px;background:#d4d4d4;"></div>
<div style="left:1px;top:680px;width:2px;height:2px;background:#d4d4d4;"></div>
<div style="left:5px;top:680px;width:2px;height:2px;background:#d4d4d4;"></div>
<div style="left:9px;top:680px;width:2px;height:2px;background:#d4d4d4;"></div>
<div style="left:1px;top:685px;width:2px;height:2px;background:#d4d4d4;"></div>
<div style="left:5px;top:685px;width:2px;height:2px;background:#d4d4d4;"></div>
<div style="left:9px;top:685px;width:2px;height:2px;background:#d4d4d4;"></div>
<div style="left:1px;top:690px;width:2px;height:2px;background:#d4d4d4;"></div>
<div style="left:5px;top:690px;width:2px;height:2px;background:#d4d4d4;"></div>
<div style="left:9px;top:690px;width:2px;height:2px;background:#d4d4d4;"></div>
<div style="left:15.50px;top:675px;width:64.44px;font-size:12.5px;color:#111;text-align:left;transform:scaleX(1.0340);transform-origin:left center;">Datum von</div>
<div style="left:83px;top:673px;width:101px;height:19px;background:#fff;border:1px solid #a0a0a0;"></div>
<div style="left:86.50px;top:675px;width:63.40px;font-size:12px;color:#000;text-align:left;font-weight:700;transform:scaleX(1.0775);transform-origin:left center;">01.11.2023</div>
<svg style="left:169px;top:680px" width="11" height="7"><path d="M0.3 0.5 L5 4.7 L9.7 0.5" fill="none" stroke="#2a7fc8" stroke-width="1.05"/></svg>
<div style="left:187.00px;top:675px;width:19.98px;font-size:12.5px;color:#111;text-align:left;">bis</div>
<div style="left:207px;top:673px;width:101px;height:19px;background:#fff;border:1px solid #a0a0a0;"></div>
<div style="left:210.50px;top:675px;width:63.40px;font-size:12px;color:#000;text-align:left;font-weight:700;transform:scaleX(1.0607);transform-origin:left center;">30.11.2023</div>
<svg style="left:293px;top:680px" width="11" height="7"><path d="M0.3 0.5 L5 4.7 L9.7 0.5" fill="none" stroke="#2a7fc8" stroke-width="1.05"/></svg>
<div style="left:317px;top:675px;width:2px;height:2px;background:#d4d4d4;"></div>
<div style="left:321px;top:675px;width:2px;height:2px;background:#d4d4d4;"></div>
<div style="left:325px;top:675px;width:2px;height:2px;background:#d4d4d4;"></div>
<div style="left:317px;top:680px;width:2px;height:2px;background:#d4d4d4;"></div>
<div style="left:321px;top:680px;width:2px;height:2px;background:#d4d4d4;"></div>
<div style="left:325px;top:680px;width:2px;height:2px;background:#d4d4d4;"></div>
<div style="left:317px;top:685px;width:2px;height:2px;background:#d4d4d4;"></div>
<div style="left:321px;top:685px;width:2px;height:2px;background:#d4d4d4;"></div>
<div style="left:325px;top:685px;width:2px;height:2px;background:#d4d4d4;"></div>
<div style="left:317px;top:690px;width:2px;height:2px;background:#d4d4d4;"></div>
<div style="left:321px;top:690px;width:2px;height:2px;background:#d4d4d4;"></div>
<div style="left:325px;top:690px;width:2px;height:2px;background:#d4d4d4;"></div>
<div style="left:327.50px;top:676px;width:36.67px;font-size:12.5px;color:#111;text-align:left;transform:scaleX(1.0255);transform-origin:left center;">Konto</div>
<div style="left:367px;top:673px;width:147px;height:19px;background:#fff;border:1px solid #a0a0a0;"></div>
<div style="left:369.50px;top:673px;width:70.67px;font-size:12px;color:#000;text-align:left;font-weight:700;transform:scaleX(0.9675);transform-origin:left center;">Alle Konten</div>
<svg style="left:498px;top:680px" width="11" height="7"><path d="M0.3 0.5 L5 4.7 L9.7 0.5" fill="none" stroke="#2a7fc8" stroke-width="1.05"/></svg>
<div style="left:517px;top:675px;width:2px;height:2px;background:#d4d4d4;"></div>
<div style="left:521px;top:675px;width:2px;height:2px;background:#d4d4d4;"></div>
<div style="left:525px;top:675px;width:2px;height:2px;background:#d4d4d4;"></div>
<div style="left:517px;top:680px;width:2px;height:2px;background:#d4d4d4;"></div>
<div style="left:521px;top:680px;width:2px;height:2px;background:#d4d4d4;"></div>
<div style="left:525px;top:680px;width:2px;height:2px;background:#d4d4d4;"></div>
<div style="left:517px;top:685px;width:2px;height:2px;background:#d4d4d4;"></div>
<div style="left:521px;top:685px;width:2px;height:2px;background:#d4d4d4;"></div>
<div style="left:525px;top:685px;width:2px;height:2px;background:#d4d4d4;"></div>
<div style="left:517px;top:690px;width:2px;height:2px;background:#d4d4d4;"></div>
<div style="left:521px;top:690px;width:2px;height:2px;background:#d4d4d4;"></div>
<div style="left:525px;top:690px;width:2px;height:2px;background:#d4d4d4;"></div>
<div style="left:531.00px;top:675px;width:31.78px;font-size:12.5px;color:#111;text-align:left;">Filter</div>
<div style="left:563px;top:673px;width:145px;height:24px;background:#fff;border:1px solid #a0a0a0;"></div>
<div style="left:566.50px;top:676px;width:74.87px;font-size:12.5px;color:#000;text-align:left;">&lt;Kein Filter&gt;</div>
<svg style="left:693px;top:685px" width="11" height="7"><path d="M0.3 0.5 L5 4.7 L9.7 0.5" fill="none" stroke="#2a7fc8" stroke-width="1.05"/></svg>
<div style="left:717px;top:675px;width:2px;height:2px;background:#d4d4d4;"></div>
<div style="left:721px;top:675px;width:2px;height:2px;background:#d4d4d4;"></div>
<div style="left:725px;top:675px;width:2px;height:2px;background:#d4d4d4;"></div>
<div style="left:717px;top:680px;width:2px;height:2px;background:#d4d4d4;"></div>
<div style="left:721px;top:680px;width:2px;height:2px;background:#d4d4d4;"></div>
<div style="left:725px;top:680px;width:2px;height:2px;background:#d4d4d4;"></div>
<div style="left:717px;top:685px;width:2px;height:2px;background:#d4d4d4;"></div>
<div style="left:721px;top:685px;width:2px;height:2px;background:#d4d4d4;"></div>
<div style="left:725px;top:685px;width:2px;height:2px;background:#d4d4d4;"></div>
<div style="left:717px;top:690px;width:2px;height:2px;background:#d4d4d4;"></div>
<div style="left:721px;top:690px;width:2px;height:2px;background:#d4d4d4;"></div>
<div style="left:725px;top:690px;width:2px;height:2px;background:#d4d4d4;"></div>
<div style="left:731px;top:677px;width:13px;height:13px;background:#fff;border:1px solid #555;"></div>
<div style="left:747.00px;top:676px;width:107.55px;font-size:12.5px;color:#111;text-align:left;transform:scaleX(1.0382);transform-origin:left center;">Erledigte anzeigen</div>
<div style="left:0px;top:696px;width:1689px;height:1px;background:#a0a0a0;"></div>
<div style="left:0px;top:699px;width:1665px;height:1px;background:#a0a0a0;"></div>
<div style="left:1px;top:703px;width:1049px;height:1px;background:#e0e0e0;"></div>
<div style="left:1px;top:703px;width:1px;height:53px;background:#a0a0a0;"></div>
<div style="left:2px;top:704px;width:1048px;height:42px;background:#f9f9f9;"></div>
<div style="left:59px;top:724px;width:991px;height:1px;background:#d8d8d8;"></div>
<div style="left:1px;top:746px;width:1049px;height:2px;background:#c8c8c8;"></div>
<div style="left:2px;top:748px;width:1662px;height:8px;background:#fff;"></div>
<div style="left:59px;top:706px;width:1px;height:17px;background:#dadada;"></div>
<div style="left:223px;top:706px;width:1px;height:17px;background:#dadada;"></div>
<div style="left:304px;top:706px;width:1px;height:17px;background:#dadada;"></div>
<div style="left:390px;top:706px;width:1px;height:17px;background:#dadada;"></div>
<div style="left:468px;top:706px;width:1px;height:17px;background:#dadada;"></div>
<div style="left:507px;top:706px;width:1px;height:17px;background:#dadada;"></div>
<div style="left:697px;top:706px;width:1px;height:17px;background:#dadada;"></div>
<div style="left:820px;top:706px;width:1px;height:17px;background:#dadada;"></div>
<div style="left:878px;top:706px;width:1px;height:17px;background:#dadada;"></div>
<div style="left:938px;top:706px;width:1px;height:17px;background:#dadada;"></div>
<div style="left:59px;top:727px;width:1px;height:18px;background:#dadada;"></div>
<div style="left:225px;top:727px;width:1px;height:18px;background:#dadada;"></div>
<div style="left:391px;top:727px;width:1px;height:18px;background:#dadada;"></div>
<div style="left:593px;top:727px;width:1px;height:18px;background:#dadada;"></div>
<div style="left:815px;top:727px;width:1px;height:18px;background:#dadada;"></div>
<div style="left:934px;top:727px;width:1px;height:18px;background:#dadada;"></div>
<div style="left:16.18px;top:707px;width:40.82px;font-size:12.5px;color:#000;text-align:right;">Lfd.Nr.</div>
<div style="left:62.00px;top:707px;width:113.10px;font-size:12.5px;color:#000;text-align:left;">Eigener Bank-Code</div>
<div style="left:226.50px;top:707px;width:72.78px;font-size:12.5px;color:#000;text-align:left;">Buch.Datum</div>
<div style="left:319.64px;top:707px;width:54.72px;font-size:12.5px;color:#000;text-align:center;">Währung</div>
<div style="left:425.17px;top:707px;width:40.83px;font-size:12.5px;color:#000;text-align:right;">Betrag</div>
<div style="left:471.00px;top:707px;width:24.84px;font-size:12.5px;color:#000;text-align:left;">S/H</div>
<div style="left:510.00px;top:707px;width:79.74px;font-size:12.5px;color:#000;text-align:left;">Buchungstext</div>
<div style="left:700.00px;top:707px;width:105.43px;font-size:12.5px;color:#000;text-align:left;">Auftrags-Referenz</div>
<div style="left:823.00px;top:707px;width:31.09px;font-size:12.5px;color:#000;text-align:left;">GVC</div>
<div style="left:881.00px;top:707px;width:63.05px;font-size:12.5px;color:#000;text-align:left;">Buch.Sc…</div>
<div style="left:941.00px;top:707px;width:65.83px;font-size:12.5px;color:#000;text-align:left;">Auszug-Nr.</div>
<div style="left:62.00px;top:729px;width:142.95px;font-size:12.5px;color:#000;text-align:left;">Empf./Auftrg. Bank-Code</div>
<div style="left:228.00px;top:729px;width:133.22px;font-size:12.5px;color:#000;text-align:left;">Empf./Auftrg. Konto-Nr.</div>
<div style="left:394.00px;top:729px;width:124.18px;font-size:12.5px;color:#000;text-align:left;">Empf./Auftrg. Name 1</div>
<div style="left:596.50px;top:729px;width:124.18px;font-size:12.5px;color:#000;text-align:left;">Empf./Auftrg. Name 2</div>
<div style="left:818.50px;top:729px;width:92.95px;font-size:12.5px;color:#000;text-align:left;">Kundenreferenz</div>
<div style="left:937.00px;top:729px;width:78.35px;font-size:12.5px;color:#000;text-align:left;">Bankreferenz</div>
<div style="left:1648px;top:703px;width:16px;height:53px;background:#f0f0f0;"></div>
<div style="left:1648px;top:720px;width:16px;height:17px;background:#cdcdcd;"></div>
<div style="left:1664px;top:699px;width:1px;height:57px;background:#8a8a8a;"></div>
<svg style="left:1648px;top:707px" width="16" height="10"><path d="M4 8 L8 4 L12 8" fill="none" stroke="#505050" stroke-width="1.8"/></svg>
<div style="left:1670px;top:729px;width:2px;height:2px;background:#1a74c0;"></div>
<div style="left:1670px;top:733px;width:2px;height:2px;background:#1a74c0;"></div>
<div style="left:1670px;top:737px;width:2px;height:2px;background:#1a74c0;"></div>
<div style="left:1670px;top:741px;width:2px;height:2px;background:#1a74c0;"></div>
<div style="left:1677px;top:699px;width:24px;height:62px;background:#f0f0f0;border:1px solid #8a8a8a;"></div>
</body></html>
